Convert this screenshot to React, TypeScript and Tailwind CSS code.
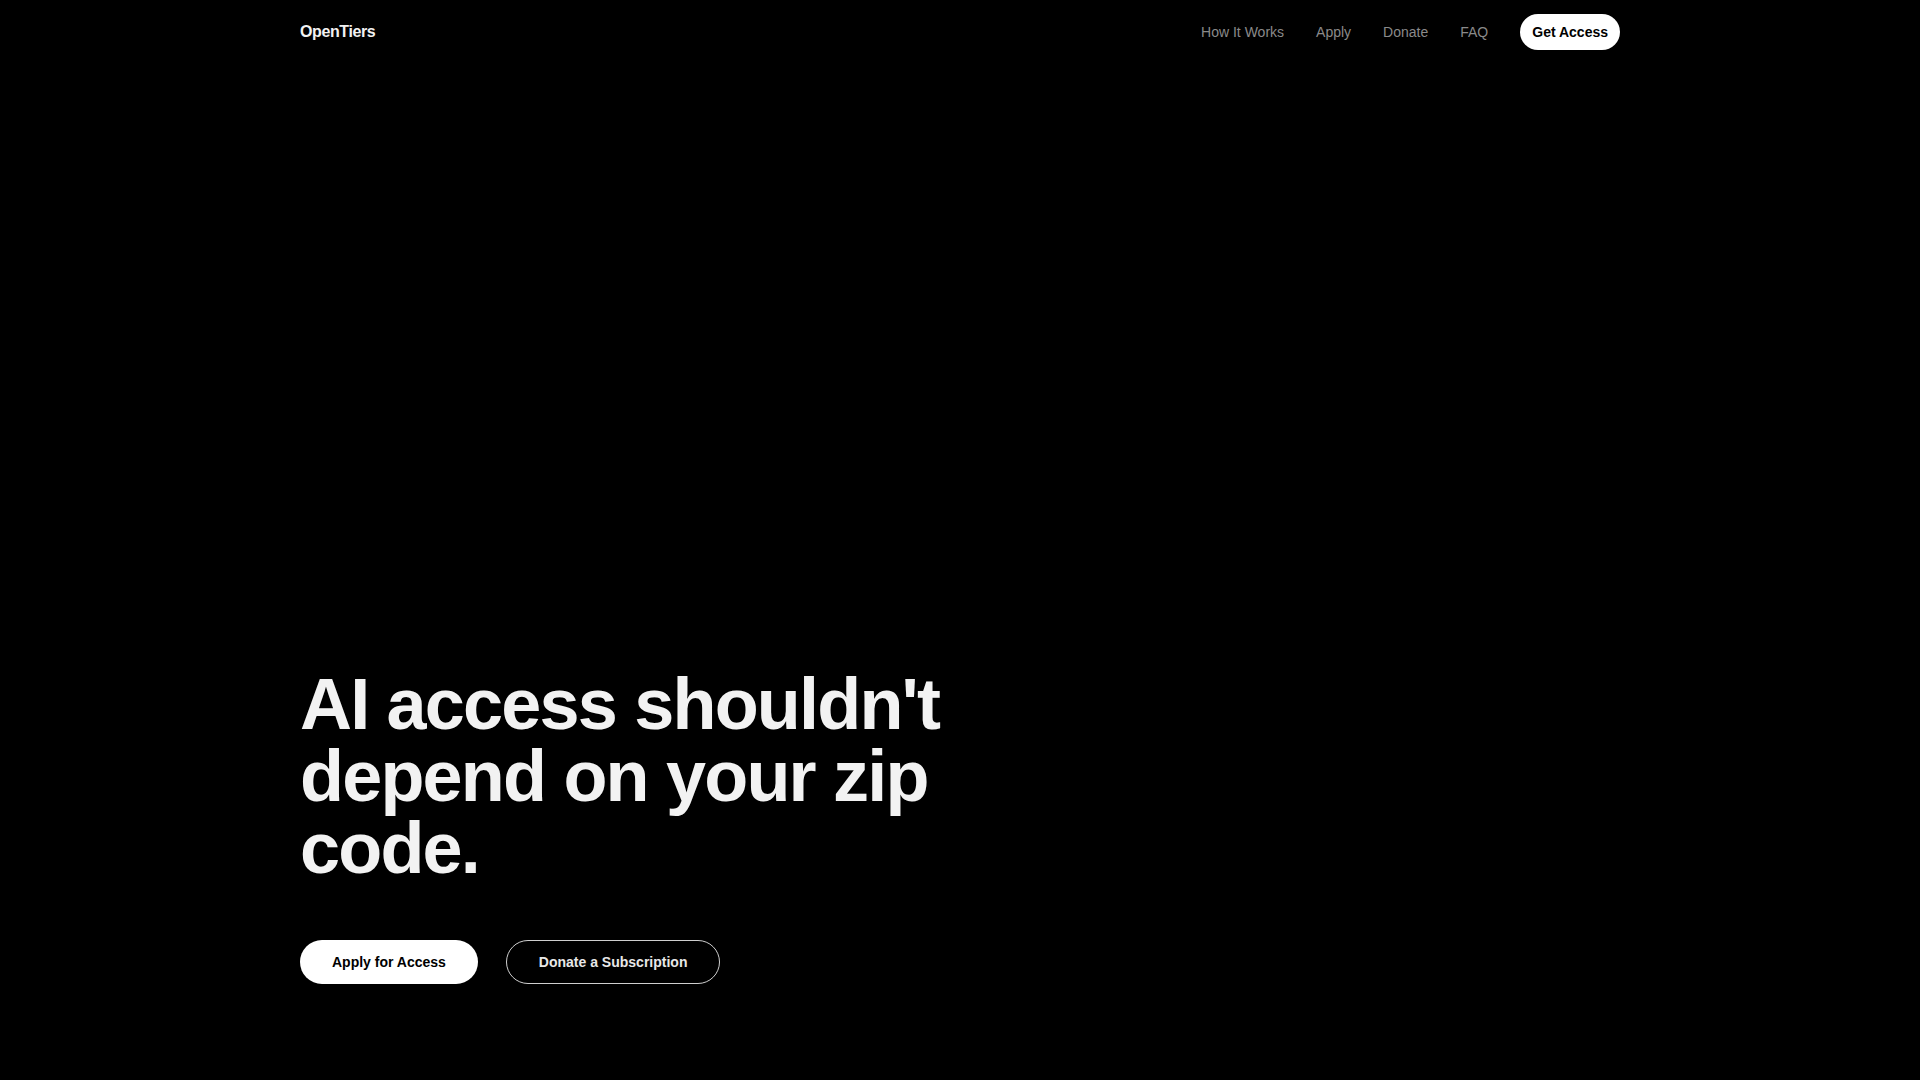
import React from "react";

const navLinks = ["How It Works", "Apply", "Donate", "FAQ"];

export default function App() {
  return (
    <div
      className="flex h-screen flex-col bg-black text-[#f2f2f2]"
      style={{ fontFamily: '"Liberation Sans", Arial, sans-serif' }}
    >
      {/* header */}
      <header className="w-full">
        <div className="mx-auto flex h-16 max-w-[1320px] items-center justify-between">
          <a href="#" className="text-base font-bold tracking-tight text-[#f2f2f2]">
            OpenTiers
          </a>
          <nav className="flex items-center gap-8">
            {navLinks.map((link) => (
              <a key={link} href="#" className="text-sm text-[#8a8a8a] hover:text-white">
                {link}
              </a>
            ))}
            <a
              href="#"
              className="rounded-full bg-white px-3 py-2 text-sm font-bold text-black"
            >
              Get Access
            </a>
          </nav>
        </div>
      </header>

      {/* hero */}
      <main className="flex flex-1 flex-col justify-end pb-24">
        <div className="mx-auto w-full max-w-[1320px]">
          <h1 className="max-w-3xl text-7xl leading-none font-bold tracking-tight text-[#f2f2f2]">
            AI access shouldn't depend on your zip code.
          </h1>
          <div className="mt-14 flex items-center gap-7">
            <a
              href="#"
              className="rounded-full bg-white px-8 py-3 text-sm font-bold text-black"
            >
              Apply for Access
            </a>
            <a
              href="#"
              className="rounded-full border border-[#cfcfcf] px-8 py-[11px] text-sm font-bold text-[#e8e8e8]"
            >
              Donate a Subscription
            </a>
          </div>
        </div>
      </main>
    </div>
  );
}
